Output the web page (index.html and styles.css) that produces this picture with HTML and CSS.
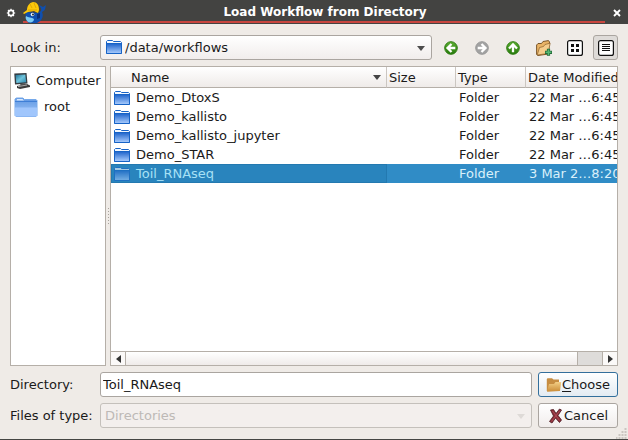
FILE: index.html
```html
<!DOCTYPE html>
<html lang="en">
<head>
<meta charset="utf-8">
<title>Load Workflow from Directory</title>
<link rel="stylesheet" href="styles.css">
</head>
<body>
<svg class="defs" aria-hidden="true">
  <defs>
    <linearGradient id="blue" x1="0" y1="0" x2="0" y2="1"><stop offset="0" stop-color="#2468cd"/><stop offset="1" stop-color="#a4c8fb"/></linearGradient>
    <linearGradient id="pale" x1="0" y1="0" x2="0" y2="1"><stop offset="0" stop-color="#5f97e2"/><stop offset="1" stop-color="#a3c9fb"/></linearGradient>
    <linearGradient id="tan" x1="0" y1="0" x2="0" y2="1"><stop offset="0" stop-color="#f3cf86"/><stop offset="1" stop-color="#c98a35"/></linearGradient>
    <linearGradient id="green" x1="0" y1="0" x2="0" y2="1"><stop offset="0" stop-color="#5dae32"/><stop offset="1" stop-color="#267a0c"/></linearGradient>
    <linearGradient id="screen" x1="0" y1="0" x2="1" y2="1"><stop offset="0" stop-color="#1d6f92"/><stop offset=".5" stop-color="#6fc4dc"/><stop offset="1" stop-color="#2b86ad"/></linearGradient>
    <symbol id="folder" viewBox="0 0 16 14">
      <path d="M.5 13.500V1.500L1.500 .5H6.500L7.500 1.500H14.500L15.500 2.500V13.500Z" fill="#f4f9ff" stroke="#1763c6"/>
      <path d="M1 4H15V13H1Z" fill="url(#blue)"/>
      <path d="M.5 3.500H15.500M.5 13.500H15.500" stroke="#1763c6"/>
    </symbol>
  </defs>
</svg>
<main class="dialog">
  <header class="titlebar">
    <svg class="ring" viewBox="0 0 10 10"><circle cx="5" cy="5" r="2.600" fill="none" stroke="#fff" stroke-width="1.600"/><path d="M5 .8V2M5 8V9.200M.8 5H2M8 5H9.200M2 2L3 3M7 7L8 8M8 2L7 3M3 7L2 8" stroke="#fff" stroke-width="1.200"/></svg>
    <svg class="logo" viewBox="0 0 24 23">
      <path d="M3 11L15 12L18 10C19 8 17 6 16 4L20 6L23 4C22 7 23 9 19 11C21 15 19 20 14 22H6C3 20 2 16 3 11Z" fill="#0f4fae"/>
      <path d="M3 15C5 17 9 16 11 18C11 21 8 22 5 21C3 19 2 17 3 15Z" fill="#7ccbf3"/>
      <path d="M14 13L17 12L17 17L14 18Z" fill="#0a2f78"/>
      <path d="M0 12L4 9C4 5 6 2 10 1C14 1 16 4 16 9L15 12L11 10L5 11L1 13Z" fill="#fbc80a"/>
      <path d="M7 3L9 7M11 2L13 7M5 9L14 9" stroke="#d79d06" fill="none" stroke-width=".8"/>
      <circle cx="9.500" cy="13.500" r="1.800" fill="#e8f6ff"/><circle cx="10" cy="13.500" r=".9" fill="#111"/>
    </svg>
    <h1>Load Workflow from Directory</h1>
    <button class="close" aria-label="Close"><svg viewBox="0 0 8 8"><path d="M1 1L7 7M7 1L1 7" stroke="#fff" stroke-width="1.900"/></svg></button>
  </header>

  <form class="content">
    <div class="row">
      <label for="look">Look in:</label>
      <div class="combo">
        <svg class="combo-icon"><use href="#folder"/></svg>
        <select id="look" class="with-icon"><option>/data/workflows</option></select>
        <svg class="arrow" viewBox="0 0 8 5"><path d="M0 0H8L4 5Z" fill="#4d4d4d"/></svg>
      </div>
      <div class="tools">
        <button type="button" aria-label="Back"><svg viewBox="0 0 16 16"><circle cx="8" cy="8" r="6.300" fill="url(#green)" stroke="#2f7d13"/><path d="M12.300 8H5M8.500 4L4.500 8L8.500 12" fill="none" stroke="#fff" stroke-width="2.300"/></svg></button>
        <button type="button" aria-label="Forward" disabled><svg viewBox="0 0 16 16"><circle cx="8" cy="8" r="6.300" fill="#a2a2a2" stroke="#999"/><path d="M3.700 8H11M7.500 4L11.500 8L7.500 12" fill="none" stroke="#fff" stroke-width="2.300"/></svg></button>
        <button type="button" aria-label="Parent directory"><svg viewBox="0 0 16 16"><circle cx="8" cy="8" r="6.300" fill="url(#green)" stroke="#2f7d13"/><path d="M8 12.300V5M4 8.500L8 4.500L12 8.500" fill="none" stroke="#fff" stroke-width="2.300"/></svg></button>
        <button type="button" aria-label="Create new folder"><svg viewBox="0 0 16 16"><path d="M.6 14.500V5L2 3.500H5.500L7 1.500L12.500 .6L13.500 2L12.500 14L2 15.500Z" fill="#e9b366" stroke="#6e4a1d" stroke-width=".9"/><path d="M1.200 15L3.500 7.500L7.500 6.500L9 4.500L14.200 3.200L12 13.500Z" fill="#f5cd8c" stroke="#8b602b" stroke-width=".7"/><path d="M12.500 8.800V15.800M9 12.300H16" stroke="#236b38" stroke-width="3.200"/><path d="M12.500 9.500V15M9.700 12.300H15.300" stroke="#56b873" stroke-width="1.600"/></svg></button>
        <button type="button" aria-label="List view"><svg viewBox="0 0 16 16"><rect x=".6" y=".6" width="14.800" height="14.800" rx="2" fill="#fff" stroke="#111" stroke-width="1.200"/><path d="M4 4H7V7H4ZM9 4H12V7H9ZM4 9H7V12H4ZM9 9H12V12H9Z" fill="#111"/></svg></button>
        <button type="button" class="active" aria-label="Detail view" aria-pressed="true"><svg viewBox="0 0 16 16"><rect x=".6" y=".6" width="14.800" height="14.800" rx="2" fill="#fff" stroke="#111" stroke-width="1.200"/><path d="M4 4.500H12M4 6.500H12M4 8.500H12M4 10.500H12" stroke="#111"/></svg></button>
      </div>
    </div>

    <div class="panels">
      <nav class="places">
        <a href="#computer"><svg class="pc" viewBox="0 0 16 16"><path d="M.3 .5L12.500 0L13.500 10.500L1 11.500Z" fill="#343c42"/><path d="M1.600 2L11.300 1.400L12.200 9.200L2.300 10Z" fill="url(#screen)"/><path d="M6 11L11 10.500L12 12L7 13Z" fill="#555"/><path d="M3 13L13 11L16 12.500V14L6 16L3 15Z" fill="#3b3b3b"/><path d="M4 13.600L13 12" stroke="#aaa"/></svg>Computer</a>
        <a href="#root" class="root"><svg class="home" viewBox="0 0 24 20"><path d="M1 18.500V2L2.500 1H9L10.500 2.500H22L23 3.500V18.500L22 19.500H2Z" fill="url(#pale)" stroke="#76a9ea"/><path d="M2.500 3.500L3 2H8.500L10 3.500Z" fill="#d8e9ff"/><path d="M1 10.500H23V18.500L22 19.500H2L1 18.500Z" fill="#a0c6fc"/><path d="M1 4.500H23" stroke="#3f7fd6"/></svg>root</a>
      </nav>
      <div class="splitter"><i></i><i></i><i></i><i></i><i></i><i></i></div>
      <section class="files">
        <table>
          <colgroup><col><col class="c-size"><col class="c-type"><col class="c-date"></colgroup>
          <thead><tr><th class="name">Name<svg class="sort" viewBox="0 0 8 5"><path d="M0 0H8L4 5Z" fill="#444"/></svg></th><th>Size</th><th>Type</th><th>Date Modified</th></tr></thead>
          <tbody>
            <tr><td><svg><use href="#folder"/></svg><span>Demo_DtoxS</span></td><td></td><td>Folder</td><td>22 Mar …6:45</td></tr>
            <tr><td><svg><use href="#folder"/></svg><span>Demo_kallisto</span></td><td></td><td>Folder</td><td>22 Mar …6:45</td></tr>
            <tr><td><svg><use href="#folder"/></svg><span>Demo_kallisto_jupyter</span></td><td></td><td>Folder</td><td>22 Mar …6:45</td></tr>
            <tr><td><svg><use href="#folder"/></svg><span>Demo_STAR</span></td><td></td><td>Folder</td><td>22 Mar …6:45</td></tr>
            <tr class="selected"><td><svg><use href="#folder"/></svg><span>Toil_RNAseq</span></td><td></td><td>Folder</td><td>3 Mar 2…8:20</td></tr>
          </tbody>
        </table>
        <div class="scrollbar">
          <button type="button" aria-label="Scroll left"><svg viewBox="0 0 5 8"><path d="M5 0V8L0 4Z" fill="#333"/></svg></button>
          <div class="track"><div class="thumb"></div></div>
          <button type="button" aria-label="Scroll right"><svg viewBox="0 0 5 8"><path d="M0 0V8L5 4Z" fill="#333"/></svg></button>
        </div>
      </section>
    </div>

    <div class="row">
      <label for="dir">Directory:</label>
      <input id="dir" type="text" value="Toil_RNAseq">
      <button type="button" class="push default"><svg viewBox="0 0 16 16"><path d="M.8 14V2L1.500 1.200H6L7.500 2.500H13V14Z" fill="#c68d42"/><path d="M1 14.800L3 7H8L9.500 5H15.200L14 14Z" fill="url(#tan)"/></svg><span><u>C</u>hoose</span></button>
    </div>
    <div class="row">
      <label for="type">Files of type:</label>
      <div class="combo">
        <select id="type" disabled><option>Directories</option></select>
        <svg class="arrow" viewBox="0 0 8 5"><path d="M0 0H8L4 5Z" fill="#dedad7"/></svg>
      </div>
      <button type="button" class="push"><svg viewBox="0 0 16 16"><path d="M2.500 2L5.500 1.500L8 5.500L11.500 1L13.500 2L10 7.500L13.500 12L11.500 14.500L7.500 10L4 15L1.500 13.500L5.500 8Z" fill="#8d2b36" stroke="#4a1c22" stroke-width=".8"/><path d="M4.500 3L11.500 12.500M12 2.500L3.500 13.500" stroke="#a84d57"/></svg><span>Cancel</span></button>
    </div>
  </form>
  <svg class="grip" viewBox="0 0 12 12"><path d="M9.500 1V12M6.500 4V12M3.500 7V12M.5 10V12" stroke="#cbc6c1" stroke-width="2" stroke-dasharray="2 1"/></svg>
</main>
</body>
</html>
```

FILE: styles.css
```css
* { box-sizing: border-box; }

body {
  margin: 0;
  font: 13px/19px "DejaVu Sans", sans-serif;
  color: #1a1a1a;
  background: #efebe7;
}

button, input, select { font: inherit; color: inherit; margin: 0; }
svg { display: block; flex: none; }
.defs { position: absolute; width: 0; height: 0; }

.dialog {
  position: relative;
  display: flex;
  flex-direction: column;
  min-height: 100vh;
  border-bottom: 1px solid #454543;
}

.titlebar {
  display: flex;
  align-items: center;
  height: 24px;
  padding: 0 7px 0 6px;
  color: #fff;
  background: linear-gradient(#c9463f, #c9463f) 23px 21px / calc(100% - 46px) 2px no-repeat, #434341;
}
.titlebar h1 {
  flex: 1;
  margin: 0;
  font: bold 12px/24px "DejaVu Sans", sans-serif;
  text-align: center;
}
.ring { width: 10px; height: 10px; margin-top: 2px; }
.logo { width: 24px; height: 23px; margin-left: 7px; }
.close { width: 18px; height: 24px; padding: 2px 0 0 10px; border: 0; background: none; }
.close svg { width: 8px; height: 8px; }

.content {
  flex: 1;
  display: flex;
  flex-direction: column;
  gap: 6px;
  padding: 11px 10px;
}
.row { display: flex; align-items: center; gap: 6px; height: 25px; }
.row label { width: 84px; white-space: nowrap; }

.combo { position: relative; flex: 1; height: 25px; }
.combo select {
  appearance: none;
  display: block;
  width: 100%;
  height: 100%;
  padding: 0 4px;
  border: 1px solid #aaa5a0;
  border-radius: 3px;
  background: linear-gradient(#fff, #f1edec);
}
.combo select.with-icon { padding-left: 24px; }
.combo select:disabled { color: #bdb9b6; border-color: #c4c0bb; background: #f3efed; opacity: 1; }
.combo-icon { position: absolute; left: 6px; top: 5px; width: 16px; height: 14px; }
.arrow { position: absolute; right: 7px; top: 11px; width: 8px; height: 5px; }

.tools { display: flex; gap: 6px; }
.tools button {
  display: grid;
  place-items: center;
  width: 25px;
  height: 25px;
  padding: 0;
  border: 1px solid transparent;
  border-radius: 3px;
  background: none;
}
.tools button.active { border-color: #aaa5a0; background: #dedbd8; }
.tools svg { width: 16px; height: 16px; }

.panels { flex: 1; display: flex; min-height: 0; }
.places { width: 96px; border: 1px solid #b5afa8; background: #fff; }
.places a {
  display: flex;
  align-items: center;
  gap: 6px;
  height: 27px;
  padding-left: 3px;
  color: inherit;
  text-decoration: none;
}
.places .root { height: 25px; }
.pc { width: 16px; height: 16px; }
.home { width: 24px; height: 20px; }

.splitter {
  display: flex;
  flex-direction: column;
  align-items: center;
  justify-content: center;
  gap: 2px;
  width: 4px;
}
.splitter i { width: 1px; height: 1px; background: #a8a39c; }

.files {
  flex: 1;
  min-width: 0;
  display: flex;
  flex-direction: column;
  justify-content: space-between;
  border: 1px solid #b5afa8;
  background: #fff;
  overflow: hidden;
}
table { width: 100%; table-layout: fixed; border-collapse: separate; border-spacing: 0; }
.c-size { width: 69px; }
.c-type { width: 70px; }
.c-date { width: 91px; }
th {
  height: 21px;
  padding: 0 0 0 2px;
  font-weight: normal;
  text-align: left;
  white-space: nowrap;
  overflow: hidden;
  border-right: 1px solid #cbc6c1;
  border-bottom: 1px solid #b5afa8;
  background: linear-gradient(#fff, #efebe9);
}
th:last-child { border-right: 0; }
th.name { padding-left: 20px; }
.sort { float: right; width: 8px; height: 5px; margin: 7px 5px 0 0; }
td { height: 19px; padding: 0 0 0 3px; white-space: nowrap; overflow: hidden; }
td:first-child { display: flex; align-items: center; gap: 6px; }
td svg { width: 16px; height: 14px; }
.selected { color: #d9f0fa; background: #308cc6; }
.selected td:first-child { color: #a6e0f5; background: #2984bd; border: 1px solid #2379b0; padding-left: 2px; }
.selected svg { opacity: .6; }

.scrollbar { display: flex; height: 14px; border-top: 1px solid #b5afa8; }
.scrollbar button {
  display: grid;
  place-items: center;
  width: 14px;
  padding: 0;
  border: 0;
  background: #fbf9f8;
}
.scrollbar button svg { width: 5px; height: 8px; }
.track { flex: 1; border: solid #b5afa8; border-width: 0 1px; background: #dedcda; }
.thumb { width: 95%; height: 100%; border-right: 1px solid #b5afa8; background: linear-gradient(#fff, #efebe9); }

input {
  flex: 1;
  min-width: 0;
  height: 25px;
  padding: 0 2px;
  border: 1px solid #aaa5a0;
  border-radius: 3px;
  background: #fff;
}
.push {
  display: flex;
  align-items: center;
  justify-content: center;
  width: 80px;
  height: 25px;
  padding: 0;
  border: 1px solid #aaa5a0;
  border-radius: 3px;
  background: linear-gradient(#fff, #f1edec);
}
.push svg { width: 16px; height: 16px; }
.push.default { border-color: #336f9c; background: linear-gradient(#fff, #e3ebf2); }
.push u { text-underline-offset: 2px; }

.grip { position: absolute; right: 0; bottom: 0; width: 12px; height: 12px; }
```
